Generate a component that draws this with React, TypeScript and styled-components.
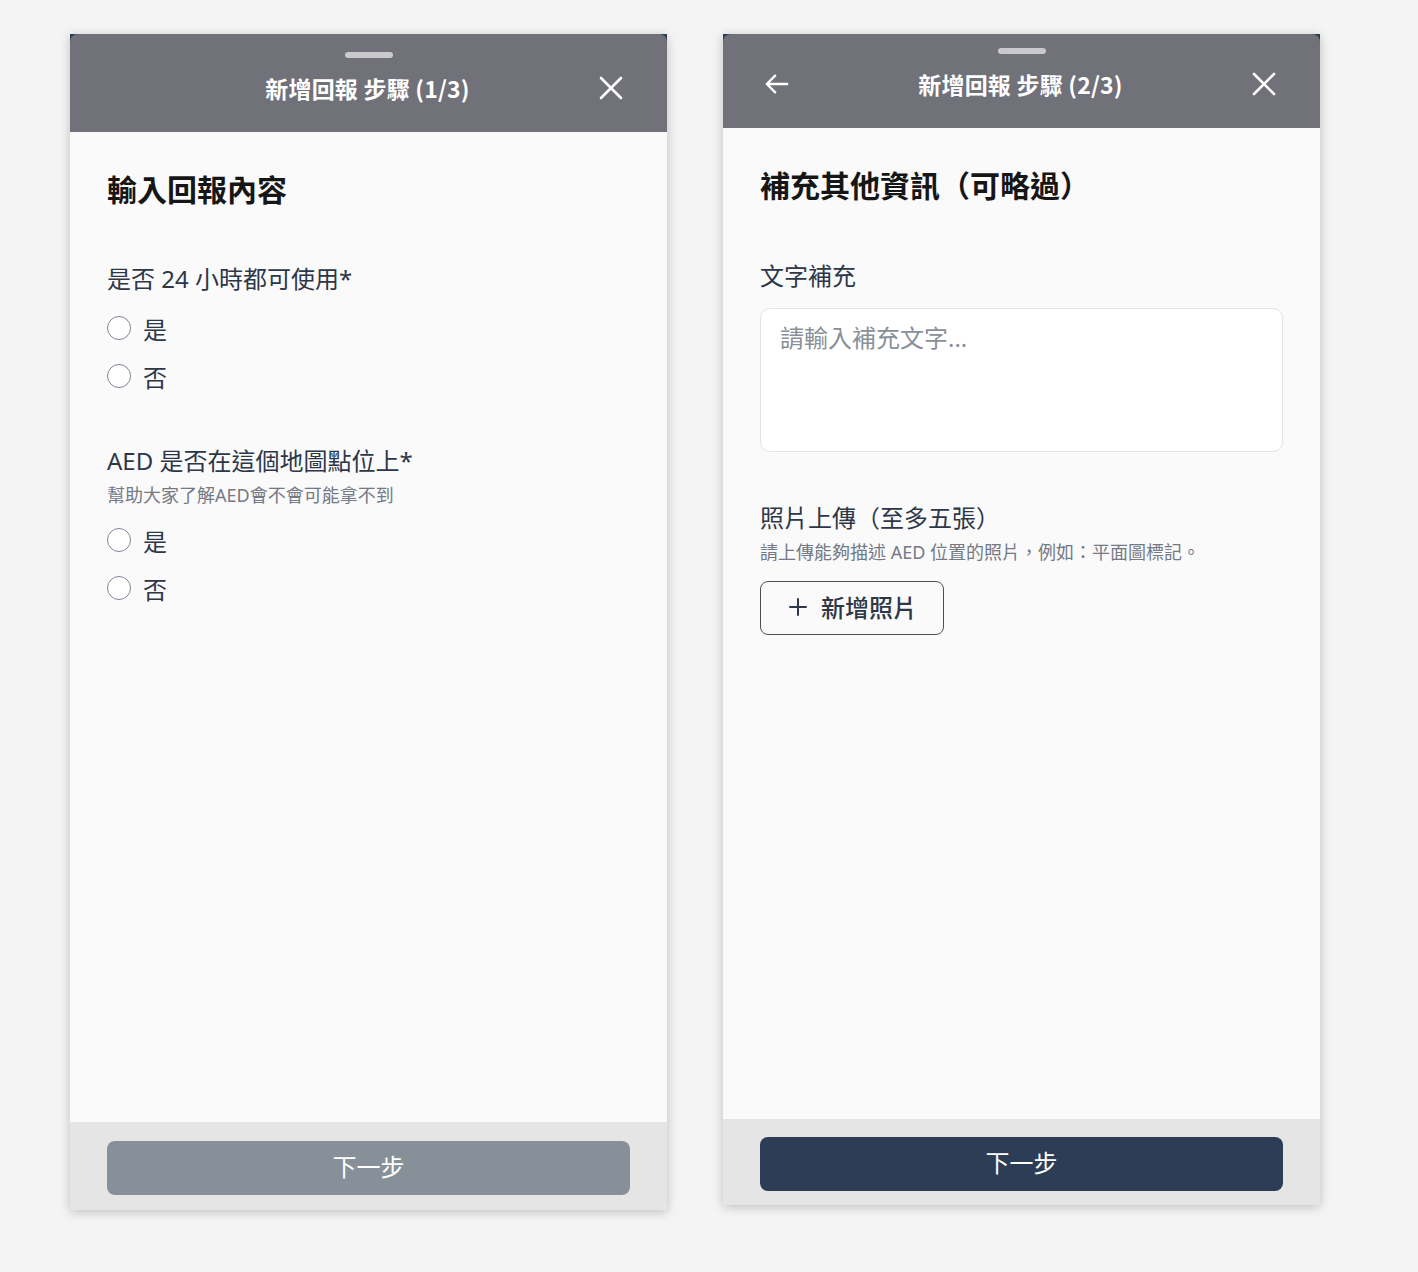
import React from "react";
import styled, { createGlobalStyle } from "styled-components";

const GlobalStyle = createGlobalStyle`
  html, body {
    margin: 0;
    padding: 0;
    background: #f4f4f4;
    font-family: "Noto Sans", "Noto Sans CJK TC", sans-serif;
  }
  * { box-sizing: border-box; }
`;

const Stage = styled.div`
  display: flex;
  align-items: flex-start;
  gap: 56px;
  padding: 34px 0 0 70px;
  height: 1272px;
`;

const Panel = styled.div<{ $h: number }>`
  width: 597px;
  height: ${(p) => p.$h}px;
  display: flex;
  flex-direction: column;
  background: #2c3e55;
  box-shadow: 0 2px 10px rgba(0, 0, 0, 0.22);
`;

const Header = styled.div<{ $h: number; $pt: number }>`
  height: ${(p) => p.$h}px;
  padding-top: ${(p) => p.$pt}px;
  background: #71717a;
  border-radius: 8px 8px 0 0;
  display: flex;
  flex-direction: column;
  align-items: center;
`;

const Handle = styled.div`
  width: 48px;
  height: 6px;
  border-radius: 3px;
  background: #c9c9ce;
`;

const HeaderRow = styled.div`
  margin-top: 6px;
  height: 48px;
  width: 100%;
  padding: 0 44px 0 42px;
  display: grid;
  grid-template-columns: 24px 1fr 24px;
  align-items: center;
`;

const HeaderTitle = styled.div`
  text-align: center;
  color: #ffffff;
  font-family: "Noto Sans CJK TC", sans-serif;
  font-size: 23px;
  font-weight: 700;
  letter-spacing: 0.2px;
`;

const IconBox = styled.div`
  width: 24px;
  height: 24px;
  display: flex;
  align-items: center;
  justify-content: center;
`;

const Body = styled.div`
  flex: 1;
  background: #fafafa;
  padding: 38px 37px 0 37px;
  display: flex;
  flex-direction: column;
`;

const PageTitle = styled.h1`
  margin: 0;
  font-size: 30px;
  line-height: 40px;
  font-weight: 700;
  color: #161616;
`;

const Section = styled.div<{ $mt: number }>`
  margin-top: ${(p) => p.$mt}px;
  display: flex;
  flex-direction: column;
`;

const Label = styled.div`
  font-size: 24px;
  line-height: 32px;
  color: #2d3748;
`;

const Sub = styled.div`
  margin-top: 6px;
  font-size: 18px;
  line-height: 24px;
  color: #737985;
`;

const RadioList = styled.div<{ $mt: number }>`
  margin-top: ${(p) => p.$mt}px;
  display: flex;
  flex-direction: column;
`;

const RadioRow = styled.label`
  height: 48px;
  display: flex;
  align-items: center;
  gap: 12px;
  font-size: 24px;
  color: #2d3748;
`;

const RadioCircle = styled.span`
  width: 24px;
  height: 24px;
  border-radius: 50%;
  border: 1.5px solid #7f8793;
  background: #ffffff;
`;

const TextArea = styled.div`
  margin-top: 16px;
  height: 144px;
  background: #ffffff;
  border: 1px solid #e4e4e4;
  border-radius: 10px;
  padding: 13px 19px;
  font-size: 24px;
  line-height: 32px;
  color: #8a8f98;
`;

const AddButton = styled.button`
  margin-top: 17px;
  align-self: flex-start;
  width: 184px;
  height: 54px;
  border: 1.5px solid #4a4f57;
  border-radius: 8px;
  background: transparent;
  display: flex;
  align-items: center;
  gap: 14px;
  padding: 0 0 3px 28px;
  font-family: inherit;
  font-size: 24px;
  font-weight: 500;
  color: #2d3748;
`;

const Footer = styled.div<{ $h: number; $pt: number }>`
  height: ${(p) => p.$h}px;
  padding: ${(p) => p.$pt}px 37px 0 37px;
  background: #e5e5e5;
`;

const NextButton = styled.button<{ $enabled: boolean }>`
  width: 100%;
  height: 54px;
  border: none;
  border-radius: 8px;
  padding: 0 0 5px 0;
  background: ${(p) => (p.$enabled ? "#2c3d55" : "#879099")};
  color: #ffffff;
  font-family: inherit;
  font-size: 24px;
  font-weight: 400;
`;

const CloseIcon = () => (
  <svg width="24" height="24" viewBox="0 0 24 24" fill="none" stroke="#fff" strokeWidth="2.6" strokeLinecap="round">
    <path d="M2 2L22 22M22 2L2 22" />
  </svg>
);

const BackIcon = () => (
  <svg width="26" height="24" viewBox="0 0 26 24" fill="none" stroke="#fff" strokeWidth="2.6" strokeLinecap="round" strokeLinejoin="round">
    <path d="M24 12H2M11 3L2 12L11 21" />
  </svg>
);

const PlusIcon = () => (
  <svg width="18" height="18" viewBox="0 0 18 18" fill="none" stroke="#2d3748" strokeWidth="2" strokeLinecap="round">
    <path d="M9 1V17M1 9H17" />
  </svg>
);

const Radio = ({ label }: { label: string }) => (
  <RadioRow>
    <RadioCircle />
    {label}
  </RadioRow>
);

export default function App() {
  return (
    <>
      <GlobalStyle />
      <Stage>
        <Panel $h={1176}>
          <Header $h={98} $pt={18}>
            <Handle />
            <HeaderRow>
              <IconBox />
              <HeaderTitle>新增回報 步驟 (1/3)</HeaderTitle>
              <IconBox>
                <CloseIcon />
              </IconBox>
            </HeaderRow>
          </Header>
          <Body>
            <PageTitle>輸入回報內容</PageTitle>
            <Section $mt={53}>
              <Label>是否 24 小時都可使用*</Label>
              <RadioList $mt={9}>
                <Radio label="是" />
                <Radio label="否" />
              </RadioList>
            </Section>
            <Section $mt={45}>
              <Label>AED 是否在這個地圖點位上*</Label>
              <Sub>幫助大家了解AED會不會可能拿不到</Sub>
              <RadioList $mt={9}>
                <Radio label="是" />
                <Radio label="否" />
              </RadioList>
            </Section>
          </Body>
          <Footer $h={88} $pt={19}>
            <NextButton $enabled={false}>下一步</NextButton>
          </Footer>
        </Panel>

        <Panel $h={1171}>
          <Header $h={94} $pt={14}>
            <Handle />
            <HeaderRow>
              <IconBox>
                <BackIcon />
              </IconBox>
              <HeaderTitle>新增回報 步驟 (2/3)</HeaderTitle>
              <IconBox>
                <CloseIcon />
              </IconBox>
            </HeaderRow>
          </Header>
          <Body>
            <PageTitle>補充其他資訊（可略過）</PageTitle>
            <Section $mt={54}>
              <Label>文字補充</Label>
              <TextArea>請輸入補充文字...</TextArea>
            </Section>
            <Section $mt={50}>
              <Label>照片上傳（至多五張）</Label>
              <Sub>請上傳能夠描述 AED 位置的照片，例如：平面圖標記。</Sub>
              <AddButton>
                <PlusIcon />
                新增照片
              </AddButton>
            </Section>
          </Body>
          <Footer $h={86} $pt={18}>
            <NextButton $enabled={true}>下一步</NextButton>
          </Footer>
        </Panel>
      </Stage>
    </>
  );
}
